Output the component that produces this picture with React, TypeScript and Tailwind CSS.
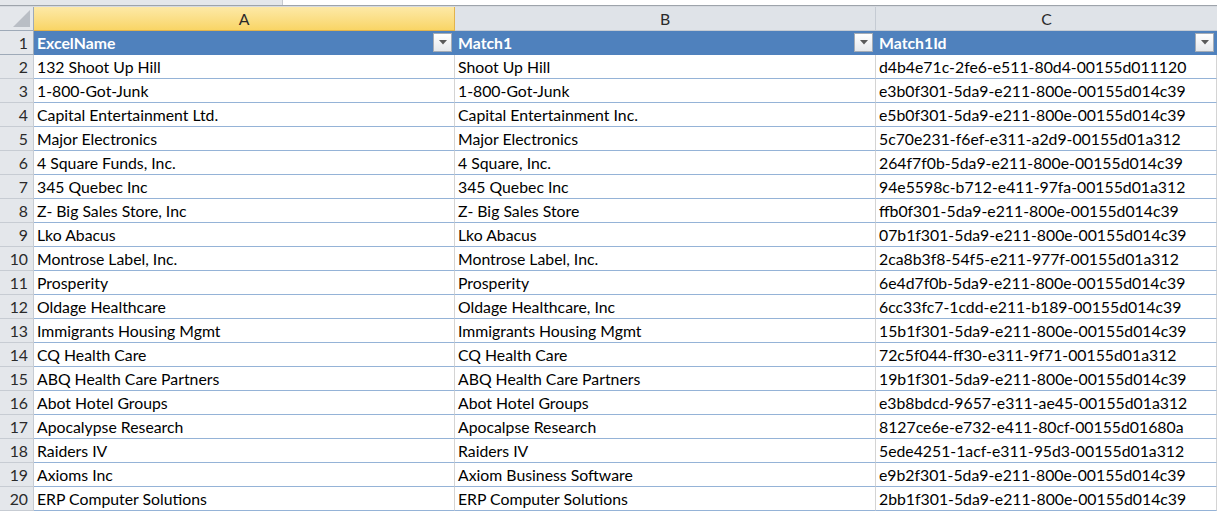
import React from "react";

const rows: [string, string, string][] = [
  ["132 Shoot Up Hill", "Shoot Up Hill", "d4b4e71c-2fe6-e511-80d4-00155d011120"],
  ["1-800-Got-Junk", "1-800-Got-Junk", "e3b0f301-5da9-e211-800e-00155d014c39"],
  ["Capital Entertainment Ltd.", "Capital Entertainment Inc.", "e5b0f301-5da9-e211-800e-00155d014c39"],
  ["Major Electronics", "Major Electronics", "5c70e231-f6ef-e311-a2d9-00155d01a312"],
  ["4 Square Funds, Inc.", "4 Square, Inc.", "264f7f0b-5da9-e211-800e-00155d014c39"],
  ["345 Quebec Inc", "345 Quebec Inc", "94e5598c-b712-e411-97fa-00155d01a312"],
  ["Z- Big Sales Store, Inc", "Z- Big Sales Store", "ffb0f301-5da9-e211-800e-00155d014c39"],
  ["Lko Abacus", "Lko Abacus", "07b1f301-5da9-e211-800e-00155d014c39"],
  ["Montrose Label, Inc.", "Montrose Label, Inc.", "2ca8b3f8-54f5-e211-977f-00155d01a312"],
  ["Prosperity", "Prosperity", "6e4d7f0b-5da9-e211-800e-00155d014c39"],
  ["Oldage Healthcare", "Oldage Healthcare, Inc", "6cc33fc7-1cdd-e211-b189-00155d014c39"],
  ["Immigrants Housing Mgmt", "Immigrants Housing Mgmt", "15b1f301-5da9-e211-800e-00155d014c39"],
  ["CQ Health Care", "CQ Health Care", "72c5f044-ff30-e311-9f71-00155d01a312"],
  ["ABQ Health Care Partners", "ABQ Health Care Partners", "19b1f301-5da9-e211-800e-00155d014c39"],
  ["Abot Hotel Groups", "Abot Hotel Groups", "e3b8bdcd-9657-e311-ae45-00155d01a312"],
  ["Apocalypse Research", "Apocalpse Research", "8127ce6e-e732-e411-80cf-00155d01680a"],
  ["Raiders IV", "Raiders IV", "5ede4251-1acf-e311-95d3-00155d01a312"],
  ["Axioms Inc", "Axiom Business Software", "e9b2f301-5da9-e211-800e-00155d014c39"],
  ["ERP Computer Solutions", "ERP Computer Solutions", "2bb1f301-5da9-e211-800e-00155d014c39"],
];

const grid = "grid grid-cols-[34px_421px_421px_1fr]";

function FilterButton() {
  return (
    <div className="absolute right-[2px] top-[2px] flex h-[19px] w-[19px] items-center justify-center border border-[#a5acb5] bg-gradient-to-b from-[#ffffff] to-[#e6e8eb]">
      <svg width="8" height="5" viewBox="0 0 8 5">
        <path d="M0 0 H8 L4 4.5 Z" fill="#5a5a5a" />
      </svg>
    </div>
  );
}

export default function App() {
  return (
    <div
      className="h-[513px] w-[1217px] overflow-hidden bg-white text-[15.8px] leading-none text-black"
      style={{ fontFamily: "Lato, 'Noto Sans', sans-serif" }}
    >
      {/* strip left of the grid, above the column letters */}
      <div className="flex h-[5px]">
        <div className="w-[283px] border-r border-[#c5c9cf] bg-[#e4e7eb]" />
        <div className="flex-1 bg-white" />
      </div>
      <div className="h-[2px] border-t border-[#9ea4ab] bg-[#d6dae0]" />

      {/* column letters */}
      <div className={`${grid} h-[24px]`}>
        <div className="relative border-r border-b border-[#9eaab8] bg-[#e4e7eb]">
          <svg className="absolute bottom-[3px] right-[3px]" width="17" height="17" viewBox="0 0 17 17">
            <path d="M17 0 V17 H0 Z" fill="#b9bec5" />
          </svg>
        </div>
        <div className="flex items-center justify-center border-r border-b border-[#e2b34c] bg-gradient-to-b from-[#fde9a6] to-[#f9d565] text-[#2a2a2a]">
          A
        </div>
        <div className="flex items-center justify-center border-r border-b border-[#c5cbd3] bg-[#dfe3e8] text-[#2a2a2a]">
          B
        </div>
        <div className="flex items-center justify-center border-b border-[#c5cbd3] bg-[#dfe3e8] text-[#2a2a2a]">
          C
        </div>
      </div>

      {/* table header row */}
      <div className={`${grid} h-[24px]`}>
        <div className="flex items-center justify-end border-r border-b border-[#9eaab8] bg-[#e4e7eb] pr-[5px] text-[#2a2a2a]">
          1
        </div>
        {["ExcelName", "Match1", "Match1Id"].map((h) => (
          <div
            key={h}
            className="relative flex items-center border-r border-b border-[#4f81bd] bg-[#4f81bd] pl-[3px] font-bold text-white"
          >
            {h}
            <FilterButton />
          </div>
        ))}
      </div>

      {rows.map((r, i) => (
        <div key={i} className={`${grid} h-[24px]`}>
          <div className="flex items-center justify-end border-r border-b border-[#c7ccd3] bg-[#e4e7eb] pr-[5px] text-[#2a2a2a]">
            {i + 2}
          </div>
          {r.map((c, j) => (
            <div
              key={j}
              className="flex items-center whitespace-nowrap border-r border-b border-r-[#d4d4d4] border-b-[#95b3d7] pl-[3px]"
            >
              {c}
            </div>
          ))}
        </div>
      ))}
    </div>
  );
}
